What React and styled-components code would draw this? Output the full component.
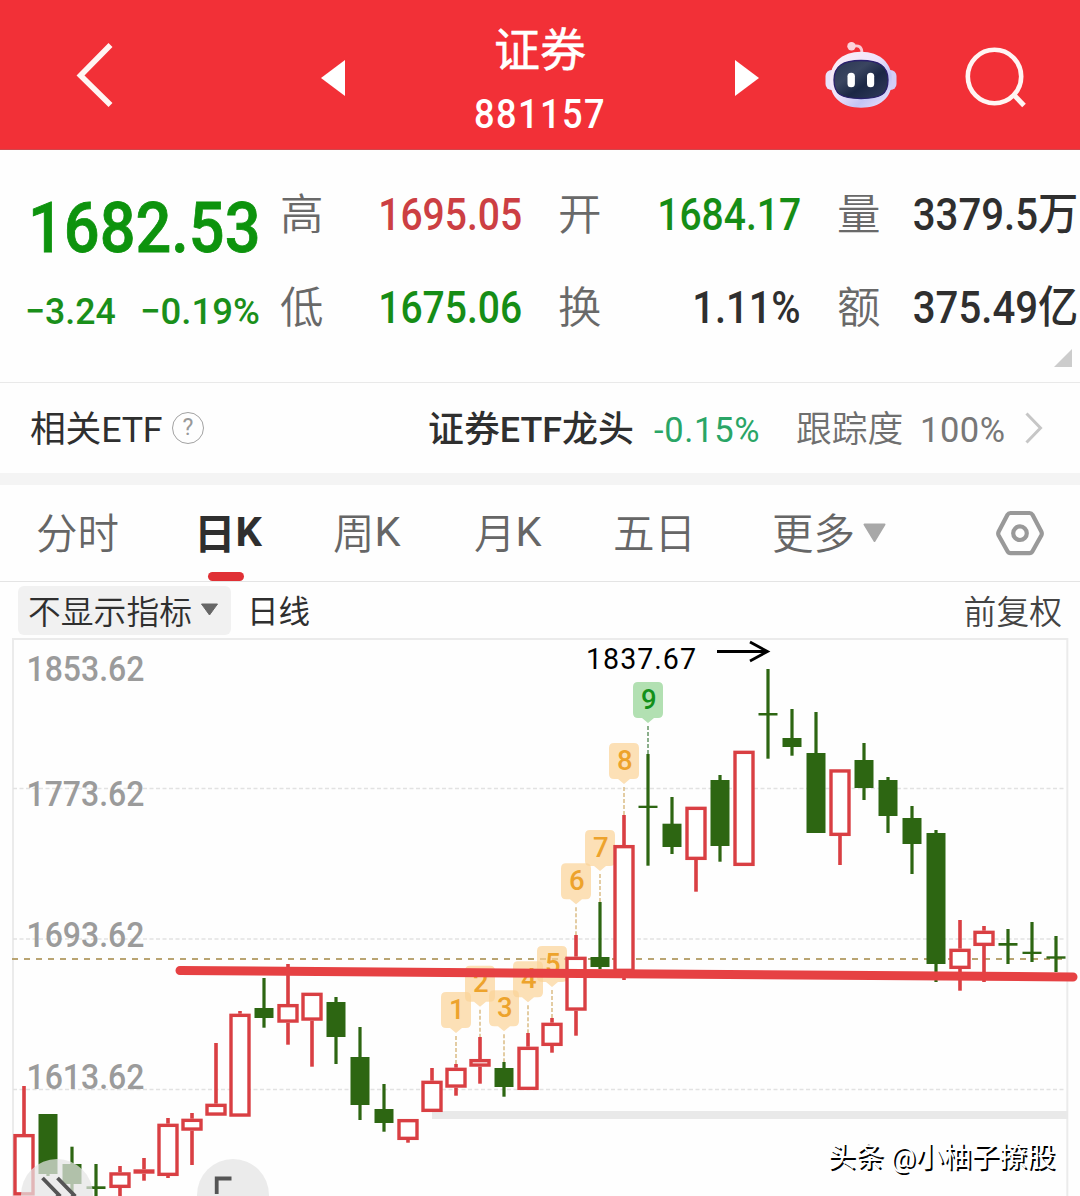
import React, { useState } from 'react';
import styled, { createGlobalStyle } from 'styled-components';

const GlobalStyle = createGlobalStyle`
  * {
    box-sizing: border-box;
  }

  body {
    margin: 0;
    background: #fefefe;
    font-family: Roboto, 'Noto Sans CJK SC', sans-serif;
  }
`;

const Page = styled.div`
  width: 1080px;
  height: 1196px;
  overflow: hidden;
  background: #fefefe;
  color: #2f2f2f;
`;

const Header = styled.header`
  display: flex;
  align-items: flex-start;
  height: 150px;
  background: #f23037;
  border-bottom: 1px solid #d0474d;
`;

const HeaderIcon = styled.svg`
  display: block;
  flex: none;
  width: ${props => props.$w}px;
  height: ${props => props.$h}px;
  margin: ${props => props.$top}px 0 0 ${props => props.$left}px;
  overflow: visible;
`;

const TitleBlock = styled.div`
  width: 150px;
  margin-left: 120px;
  padding-top: 21px;
  display: flex;
  flex-direction: column;
  align-items: center;
  color: #fff;
`;

const Title = styled.h1`
  margin: 0;
  font-size: 46px;
  font-weight: 400;
  line-height: 58px;
  -webkit-text-stroke: 0.5px #fff;
`;

const Code = styled.div`
  margin-top: 6px;
  font-size: 40px;
  font-weight: 500;
  line-height: 60px;
  letter-spacing: 1.6px;
  transform: scaleX(0.905);
`;

const Quote = styled.section`
  display: flex;
  height: 233px;
  border-bottom: 1px solid #e9e9e9;
  position: relative;
`;

const PriceBlock = styled.div`
  width: 281px;
  padding-top: 37px;
`;

const Digits = styled.span`
  display: inline-block;
  white-space: nowrap;
  font-weight: 500;
  transform: scaleX(${props => props.$scale || 0.888});
  transform-origin: ${props => props.$origin || 'left'} center;
`;

const Price = styled.div`
  padding-left: 28px;
  height: 82px;
  font-size: 71px;
  line-height: 82px;
  color: #0d930d;
  -webkit-text-stroke: 0.8px #0d930d;
`;

const Change = styled.div`
  display: flex;
  margin-top: 17px;
  height: 50px;
  padding-left: 25px;
  font-size: 37.5px;
  line-height: 50px;
  color: #1a8f1a;
`;

const ChangeItem = styled.div`
  width: ${props => props.$width}px;
`;

const Stats = styled.div`
  display: grid;
  grid-template-columns: 241px 37px 242px 37px 240px;
  grid-template-rows: 93px 93px;
  padding-top: 19px;
`;

const Stat = styled.div`
  display: flex;
  justify-content: space-between;
  align-items: center;
  grid-column: ${props => props.$col};
  height: 93px;
  font-size: 44px;
  line-height: 93px;
  color: ${props => props.$color || '#2f2f2f'};
`;

const StatLabel = styled.span`
  margin-left: -1px;
  font-size: 43.5px;
  font-weight: 350;
  line-height: 91px;
  color: #696969;
`;

const Corner = styled.div`
  position: absolute;
  right: 8px;
  bottom: 15px;
  width: 18px;
  height: 18px;
  background: #ccc;
  clip-path: polygon(100% 0, 100% 100%, 0 100%);
`;

const EtfRow = styled.section`
  display: flex;
  align-items: center;
  height: 90px;
  padding-left: 30px;
  font-size: 36px;
  line-height: 86px;
  white-space: nowrap;
`;

const EtfLabel = styled.div`
  width: 142px;
  padding-top: 4px;
  font-size: 35.8px;
  letter-spacing: -0.2px;
`;

const Help = styled.div`
  width: 32px;
  height: 32px;
  border: 1.6px solid #a2a2a2;
  border-radius: 50%;
  color: #999;
  font-size: 23px;
  line-height: 30px;
  text-align: center;
`;

const EtfName = styled.div`
  width: 226px;
  padding-top: 4px;
  margin-left: 224px;
  font-weight: 500;
  font-size: 35.9px;
`;

const EtfChange = styled.div`
  width: 142px;
  padding-top: 4px;
  font-size: 34.5px;
  letter-spacing: 0.7px;
  color: #2aa566;
`;

const Track = styled.div`
  width: 124px;
  padding-top: 4px;
  font-size: 35.8px;
  font-weight: 350;
  color: #6f6f6f;
`;

const TrackValue = styled.div`
  width: 105px;
  padding-top: 4px;
  font-size: 34.5px;
  letter-spacing: 0.5px;
  color: #777;
`;

const Divider = styled.div`
  height: 12px;
  background: #f4f4f4;
`;

const Tabs = styled.nav`
  display: flex;
  height: 97px;
  padding-left: 36px;
  border-bottom: 1px solid #e4e4e4;
`;

const Tab = styled.div`
  position: relative;
  display: flex;
  align-items: center;
  flex: none;
  width: ${props => props.$width}px;
  height: 97px;
  padding-bottom: ${props => (props.$icon ? 0 : 5)}px;
  font-size: 41.5px;
  font-weight: ${props => (props.$active ? 700 : 350)};
  color: ${props => (props.$active ? '#2f2f2f' : '#666')};
  cursor: pointer;

  &::after {
    content: '';
    display: ${props => (props.$active ? 'block' : 'none')};
    position: absolute;
    left: 14px;
    bottom: 1px;
    width: 36px;
    height: 9px;
    border-radius: 5px;
    background: #e03035;
  }
`;

const Unit = styled.span`
  font-weight: ${props => (props.$active ? 700 : 400)};
`;

const MoreArrow = styled.svg`
  display: block;
  width: 23px;
  height: 20px;
  margin: 4px 0 0 8px;
`;

const Toolbar = styled.div`
  display: flex;
  align-items: center;
  height: 56px;
  padding: 0 18px 0 18px;
  font-size: 32.8px;
  line-height: 50px;
`;

const IndicatorButton = styled.div`
  display: flex;
  align-items: center;
  gap: 8px;
  width: 213px;
  height: 49px;
  padding-left: 10px;
  border-radius: 6px;
  background: #f1f1f1;
  font-weight: 350;

  span {
    padding-top: 6px;
  }
`;

const Period = styled.div`
  margin-left: 16px;
  padding-top: 6px;
  font-size: 31.5px;
`;

const Adjust = styled.div`
  margin-left: auto;
  padding-top: 6px;
  font-weight: 350;
  color: #444;
`;

const ChartArea = styled.main`
  position: relative;
  height: 558px;
`;

const RoundButton = styled.div`
  position: absolute;
  left: ${props => props.$left}px;
  top: 521px;
  width: 72px;
  height: 72px;
  border-radius: 50%;
  background: ${props => props.$bg};

  svg {
    display: block;
  }
`;

const Watermark = styled.div`
  position: absolute;
  right: 25px;
  top: 500px;
  font-size: 27.9px;
  line-height: 40px;
  color: #fff;
  text-shadow: 1.8px 1.8px 0 #000;
  white-space: nowrap;
`;

const RED = '#d93f43';
const GREEN = '#2d6612';

// [x, high, body top, body bottom, low, rising]
const candles = [
  [24, 1086, 1134, 1195.5, 1195.5, 1],
  [48, 1114, 1114, 1174, 1176, 0],
  [72, 1146.7, 1164, 1184, 1192, 0],
  [96, 1164, 1186.3, 1189, 1200, 0],
  [120, 1166, 1172.3, 1188, 1200, 1],
  [144, 1158, 1169.3, 1173.7, 1180.7, 1],
  [168, 1118, 1123.7, 1176, 1178, 1],
  [192, 1113, 1118.7, 1130.7, 1165, 1],
  [216, 1043, 1103.7, 1115.7, 1115.7, 1],
  [240, 1011, 1013.7, 1116.7, 1116.7, 1],
  [264, 978, 1008, 1018, 1027.7, 0],
  [288, 964, 1004, 1022.7, 1044.7, 1],
  [312, 992.7, 992.7, 1020.7, 1066.7, 1],
  [336, 997, 1002, 1037, 1064, 0],
  [360, 1027, 1057, 1105, 1120, 0],
  [384, 1084, 1109, 1123, 1131.7, 0],
  [408, 1119, 1119, 1140, 1142.7, 1],
  [432, 1068, 1080.7, 1112, 1112, 1],
  [456, 1064, 1067.7, 1087.7, 1095.7, 1],
  [480, 1037, 1059, 1066.7, 1083.7, 1],
  [504, 1062, 1068, 1087, 1096.7, 0],
  [528, 1033, 1046.7, 1090, 1090, 1],
  [552, 1018, 1022.7, 1046, 1052.7, 1],
  [576, 935, 956.7, 1010.7, 1035.7, 1],
  [600, 902, 957, 967, 969, 0],
  [624, 815, 845, 972, 980, 1],
  [648, 754, 805.7, 808, 865.7, 0],
  [672, 797, 823.7, 847, 854, 0],
  [696, 806.7, 806.7, 860, 891.7, 1],
  [720, 775, 780, 846, 861.7, 0],
  [744, 750.7, 750.7, 866, 866, 1],
  [768, 669, 713, 715.5, 758.7, 0],
  [792, 709, 738, 747, 755.7, 0],
  [816, 712, 753, 833, 833, 0],
  [840, 769.3, 769.3, 836, 865, 1],
  [864, 743, 760, 788, 800, 0],
  [888, 777, 780, 816, 833, 0],
  [912, 806, 818, 844, 874, 0],
  [936, 830, 833, 964, 982, 0],
  [960, 920, 948.7, 969, 990.7, 1],
  [984, 926, 930.7, 946, 982, 1],
  [1008, 929, 943, 945.7, 964, 0],
  [1032, 922, 951.7, 954, 962, 0],
  [1056, 936, 956.3, 958.7, 972, 0],
];

// [x, badge top, stem end]
const marks = [
  [456, 992, 1064],
  [480, 965.7, 1037],
  [504, 990.3, 1062],
  [528, 961.3, 1033],
  [552, 946, 1018],
  [576, 863.3, 935],
  [600, 830, 902],
  [624, 743, 815],
  [648, 682, 754],
];

const axis = [
  ['1853.62', 681],
  ['1773.62', 806],
  ['1693.62', 947.3],
  ['1613.62', 1088.7],
];

const Candle = ({ data }) => {
  const [x, high, top, bottom, low, up] = data;

  if (!up) {
    return (
      <g fill={GREEN}>
        <rect x={x - 1.6} y={high} width="3.2" height={low - high} />
        <rect x={x - 9.5} y={top} width="19" height={bottom - top} />
      </g>
    );
  }

  const flat = bottom - top < 6;
  return (
    <g>
      <rect x={x - 1.8} y={high} width="3.6" height={Math.max(top - high, 0)} fill={RED} />
      <rect x={x - 1.8} y={bottom} width="3.6" height={Math.max(low - bottom, 0)} fill={RED} />
      {flat ? (
        <rect x={x - 10.5} y={top} width="21" height={bottom - top} fill={RED} />
      ) : (
        <rect
          x={x - 9}
          y={top + 1.65}
          width="18"
          height={bottom - top - 3.3}
          fill="#fff"
          stroke={RED}
          strokeWidth="3.4"
        />
      )}
    </g>
  );
};

const Mark = ({ data, label }) => {
  const [x, top, end] = data;
  const last = label === 9;

  return (
    <g>
      <line
        x1={x}
        x2={x}
        y1={top + 44}
        y2={end}
        stroke={last ? '#6f9c6f' : '#dcc08c'}
        strokeWidth="1.6"
        strokeDasharray="4 2"
      />
      <path
        d={`M${x - 10} ${top} h20 q5 0 5 5 v26 q0 5 -5 5 h-4 l-6 5 l-6 -5 h-4 q-5 0 -5 -5 v-26 q0 -5 5 -5 z`}
        fill={last ? '#b2e0b2' : '#fbd397'}
        fillOpacity={last ? 1 : 0.7}
      />
      <text
        x={x + 0.8}
        y={top + 26.7}
        fontSize="27.5"
        fontWeight="500"
        textAnchor="middle"
        fill={last ? '#12901a' : '#eda32c'}
      >
        {label}
      </text>
    </g>
  );
};

const Chart = () => (
  <svg width="1080" height="558" viewBox="0 638 1080 558" display="block">
    <path d="M13 1200 V639 H1067.3 V1200" fill="none" stroke="#ebebeb" strokeWidth="2" />
    {[788.5, 939, 1089.5].map(y => (
      <line key={y} x1="13" x2="1066" y1={y} y2={y} stroke="#e2e2e2" strokeWidth="1.3" strokeDasharray="4 2.5" />
    ))}
    <rect x="432" y="1111" width="636" height="8" fill="#e9e9e9" />
    {axis.map(([label, y]) => (
      <text
        key={label}
        x="26.5"
        y={y}
        fontSize="34.7"
        fontWeight="500"
        fill="#9b9b9b"
        textLength="118"
        lengthAdjust="spacingAndGlyphs"
      >
        {label}
      </text>
    ))}
    <line x1="12" x2="1066" y1="959" y2="959" stroke="#b9a472" strokeWidth="1.8" strokeDasharray="6 6" />
    {marks.map((m, i) => (
      <Mark key={m[0]} data={m} label={i + 1} />
    ))}
    {candles.map(c => (
      <Candle key={c[0]} data={c} />
    ))}
    <line x1="180" y1="970.5" x2="1073" y2="977" stroke="#e64143" strokeWidth="9" strokeLinecap="round" />
    <text x="586" y="668.7" fontSize="28.6" textLength="110" fill="#000">
      1837.67
    </text>
    <path d="M717 651.5 H767 M750 642 L767.5 651.5 L750 661" fill="none" stroke="#000" strokeWidth="2.8" />
  </svg>
);

const Robot = () => (
  <HeaderIcon $w={72} $h={66} $top={42} $left={66} viewBox="0 0 72 66">
    <defs>
      <linearGradient id="shell" x1="0" y1="0" x2="1" y2="1">
        <stop offset="0" stopColor="#fff0f4" />
        <stop offset="0.45" stopColor="#eee3fb" />
        <stop offset="0.7" stopColor="#c3c5f5" />
        <stop offset="1" stopColor="#f2e6fb" />
      </linearGradient>
      <linearGradient id="face" x1="0" y1="0" x2="1" y2="1">
        <stop offset="0" stopColor="#2a3652" />
        <stop offset="0.35" stopColor="#3a4560" />
        <stop offset="0.6" stopColor="#1b2745" />
        <stop offset="1" stopColor="#323c5c" />
      </linearGradient>
    </defs>
    <path d="M27 4.5 C34 2.5 37 5 37 11" fill="none" stroke="#fbc9d3" strokeWidth="2.8" />
    <circle cx="26.5" cy="4.3" r="4.2" fill="#fcd3dc" />
    <rect x="0.5" y="28" width="14" height="20" rx="6" fill="#e9e2fb" />
    <rect x="57.5" y="28" width="14" height="20" rx="6" fill="#d3cff7" />
    <path d="M36 9.7 C55 9.7 67 21 67 38 C67 56 55 65.7 36 65.7 C17 65.7 5 56 5 38 C5 21 17 9.7 36 9.7 Z" fill="url(#shell)" />
    <path
      d="M36 18.5 C54 18.5 63 24 63 38 C63 52 56 56.5 36 56.5 C16 56.5 9 52 9 38 C9 24 18 18.5 36 18.5 Z"
      fill="url(#face)"
      stroke="#2a206c"
      strokeWidth="1.3"
    />
    <rect x="22.5" y="30.7" width="7.4" height="14.6" rx="3.6" fill="#fff" />
    <rect x="42" y="30.7" width="7.2" height="14.6" rx="3.6" fill="#fff" />
  </HeaderIcon>
);

const tabs = [
  { name: '分时', width: 158 },
  { name: '日', unit: 'K', width: 139 },
  { name: '周', unit: 'K', width: 141 },
  { name: '月', unit: 'K', width: 139 },
  { name: '五日', width: 159 },
];

const App = () => {
  const [active, setActive] = useState('日');

  return (
    <Page>
      <GlobalStyle />
      <Header>
        <HeaderIcon $w={36} $h={64} $top={43} $left={77} viewBox="0 0 36 64">
          <path d="M33.5 2 L3.5 32.5 L33.5 62" fill="none" stroke="#fff5f3" strokeWidth="5.6" />
        </HeaderIcon>
        <HeaderIcon $w={24} $h={36} $top={60} $left={208} viewBox="0 0 24 36">
          <path d="M24 0 V36 L0 18 Z" fill="#fff" />
        </HeaderIcon>
        <TitleBlock>
          <Title>证券</Title>
          <Code>881157</Code>
        </TitleBlock>
        <HeaderIcon $w={24} $h={36} $top={60} $left={120} viewBox="0 0 24 36">
          <path d="M0 0 V36 L24 18 Z" fill="#fff" />
        </HeaderIcon>
        <Robot />
        <HeaderIcon $w={60} $h={60} $top={47} $left={69} viewBox="0 0 60 60">
          <circle cx="28.5" cy="29.5" r="26.7" fill="none" stroke="#fff5f3" strokeWidth="4.6" />
          <path d="M47.5 47.5 L58 58.5" stroke="#fff5f3" strokeWidth="5" />
        </HeaderIcon>
      </Header>

      <Quote>
        <PriceBlock>
          <Price>
            <Digits $scale={0.888}>1682.53</Digits>
          </Price>
          <Change>
            <ChangeItem $width={115}>
              <Digits $scale={0.95}>−3.24</Digits>
            </ChangeItem>
            <ChangeItem $width={130}>
              <Digits $scale={0.975}>−0.19%</Digits>
            </ChangeItem>
          </Change>
        </PriceBlock>
        <Stats>
          <Stat $col="1" $color="#cc3f43">
            <StatLabel>高</StatLabel>
            <Digits $origin="right">1695.05</Digits>
          </Stat>
          <Stat $col="3" $color="#168d16">
            <StatLabel>开</StatLabel>
            <Digits $origin="right">1684.17</Digits>
          </Stat>
          <Stat $col="5">
            <StatLabel>量</StatLabel>
            <Digits $origin="right" $scale={0.913}>3379.5万</Digits>
          </Stat>
          <Stat $col="1" $color="#168d16">
            <StatLabel>低</StatLabel>
            <Digits $origin="right">1675.06</Digits>
          </Stat>
          <Stat $col="3">
            <StatLabel>换</StatLabel>
            <Digits $origin="right" $scale={0.905}>1.11%</Digits>
          </Stat>
          <Stat $col="5">
            <StatLabel>额</StatLabel>
            <Digits $origin="right" $scale={0.913}>375.49亿</Digits>
          </Stat>
        </Stats>
        <Corner />
      </Quote>

      <EtfRow>
        <EtfLabel>相关ETF</EtfLabel>
        <Help>?</Help>
        <EtfName>证券ETF龙头</EtfName>
        <EtfChange>-0.15%</EtfChange>
        <Track>跟踪度</Track>
        <TrackValue>100%</TrackValue>
        <svg width="18" height="32" viewBox="0 0 18 32">
          <path d="M1.5 1.5 L15.5 16 L1.5 30.5" fill="none" stroke="#c6c6c6" strokeWidth="3" />
        </svg>
      </EtfRow>
      <Divider />

      <Tabs>
        {tabs.map(tab => (
          <Tab key={tab.name} $width={tab.width} $active={tab.name === active} onClick={() => setActive(tab.name)}>
            {tab.name}
            {tab.unit && <Unit $active={tab.name === active}>{tab.unit}</Unit>}
          </Tab>
        ))}
        <Tab $width={224}>
          更多
          <MoreArrow viewBox="0 0 23 20">
            <path d="M1.5 1.5 H21.5 L11.5 18 Z" fill="#a8a8a8" stroke="#a8a8a8" strokeWidth="2" strokeLinejoin="round" />
          </MoreArrow>
        </Tab>
        <Tab $width={50} $icon>
          <svg width="50" height="50" viewBox="0 0 50 50" fill="none" stroke="#999" strokeLinejoin="round">
            <path d="M14.5 4 H33.5 Q35.5 4 36.5 5.7 L45.3 22.5 Q46.3 24.5 45.3 26.5 L36.5 42.3 Q35.5 44.2 33.5 44.2 H14.5 Q12.5 44.2 11.5 42.3 L2.7 26.5 Q1.7 24.5 2.7 22.5 L11.5 5.7 Q12.5 4 14.5 4 Z" strokeWidth="4.2" />
            <circle cx="24" cy="24.2" r="6.8" strokeWidth="4.2" />
          </svg>
        </Tab>
      </Tabs>

      <Toolbar>
        <IndicatorButton>
          <span>不显示指标</span>
          <svg width="19" height="14" viewBox="0 0 19 14">
            <path d="M1.5 1 H17.5 L9.5 12 Z" fill="#666" stroke="#666" strokeLinejoin="round" />
          </svg>
        </IndicatorButton>
        <Period>日线</Period>
        <Adjust>前复权</Adjust>
      </Toolbar>

      <ChartArea>
        <Chart />
        <RoundButton $left={21} $bg="rgba(228, 228, 228, 0.72)">
          <svg width="72" height="72" viewBox="0 0 72 72" fill="none" stroke="#555" strokeWidth="3.8">
            <path d="M21.5 19 L38 36 L21.5 53 M36.5 19 L53 36 L36.5 53" />
          </svg>
        </RoundButton>
        <RoundButton $left={197} $bg="#ebebeb">
          <svg width="72" height="72" viewBox="0 0 72 72" fill="none" stroke="#555" strokeWidth="3.8">
            <path d="M19.7 35 V19.5 H34.5 M52.3 37 V52.5 H37.5" />
          </svg>
        </RoundButton>
        <Watermark>头条 @小柚子撩股</Watermark>
      </ChartArea>
    </Page>
  );
};

export default App;
